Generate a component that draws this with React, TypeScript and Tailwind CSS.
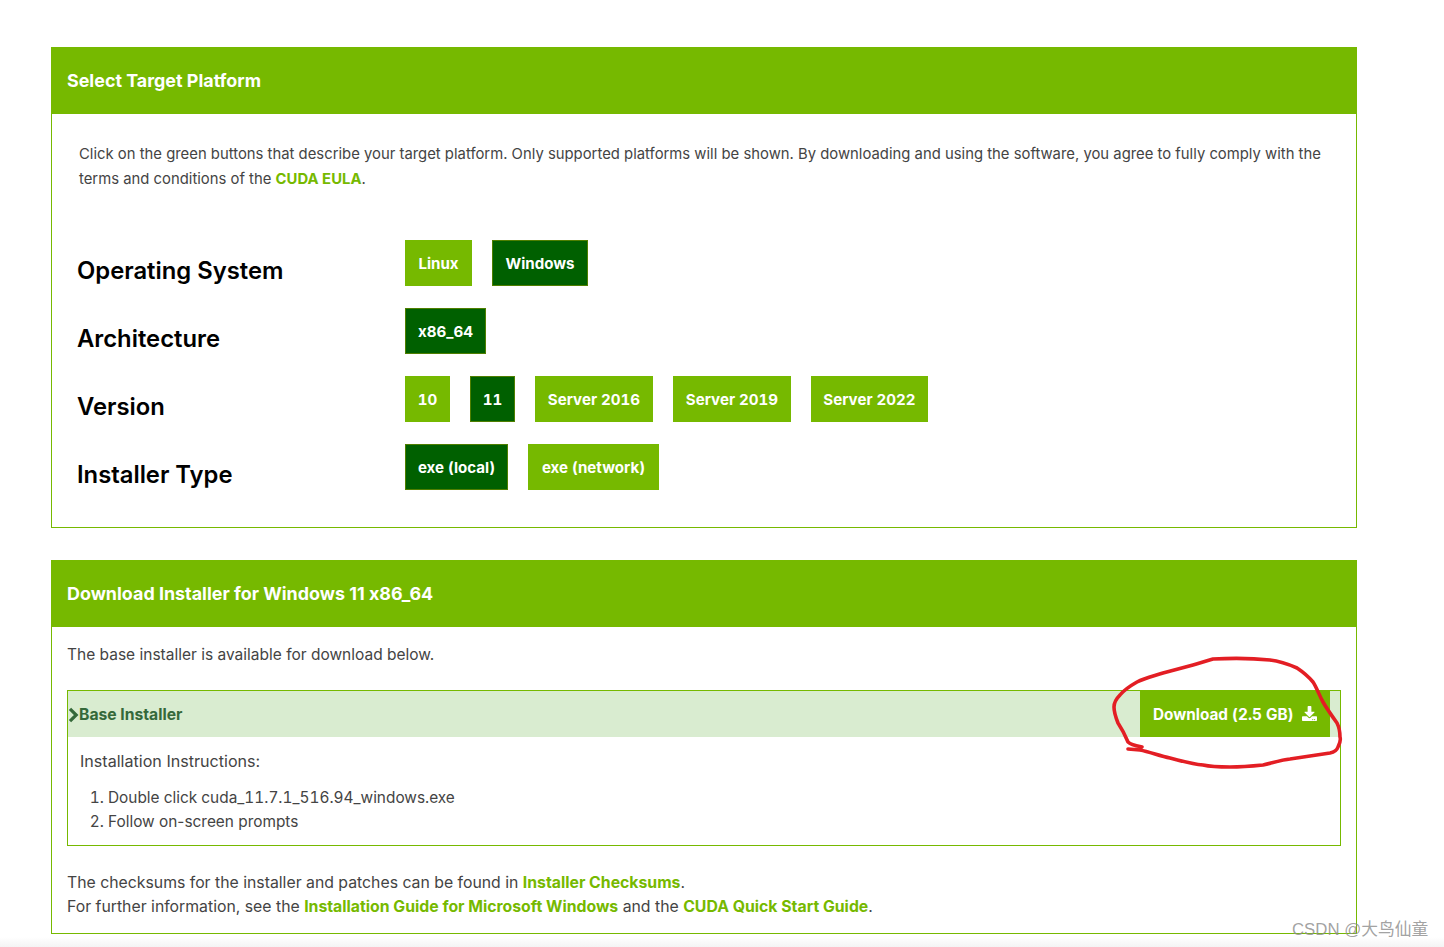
import { FaDownload } from 'react-icons/fa';

const rows = [
  {
    label: 'Operating System',
    options: [
      { name: 'Linux', width: 'w-[67px]' },
      { name: 'Windows', width: 'w-[96px]', active: true },
    ],
  },
  { label: 'Architecture', options: [{ name: 'x86_64', width: 'w-[81px]', active: true }] },
  {
    label: 'Version',
    options: [
      { name: '10', width: 'w-[45px]' },
      { name: '11', width: 'w-[45px]', active: true },
      { name: 'Server 2016', width: 'w-[118px]' },
      { name: 'Server 2019', width: 'w-[118px]' },
      { name: 'Server 2022', width: 'w-[117px]' },
    ],
  },
  {
    label: 'Installer Type',
    options: [
      { name: 'exe (local)', width: 'w-[103px]', active: true },
      { name: 'exe (network)', width: 'w-[131px]' },
    ],
  },
];

function PanelHeader({ title }: { title: string }) {
  return (
    <div className="flex h-[67px] items-center bg-[#76b900] pl-[15px] pt-[2px] text-[17.9px] font-bold text-white">
      {title}
    </div>
  );
}

export default function App() {
  return (
    <div className="relative h-[947px] w-[1444px] overflow-hidden bg-white font-['Inter',sans-serif] text-[#444444] [font-feature-settings:'calt'_0]">
      <div className="w-[1306px] ml-[51px] pt-[47px]">
        {/* Target platform */}
        <section className="h-[481px] border border-t-0 border-[#76b900]">
          <PanelHeader title="Select Target Platform" />
          <p className="pl-[27px] pr-[20px] pt-[28px] text-[14.85px] leading-[25px]">
            Click on the green buttons that describe your target platform. Only supported platforms will be shown. By
            downloading and using the software, you agree to fully comply with the terms and conditions of the{' '}
            <a className="font-bold text-[#76b900]">CUDA EULA</a>.
          </p>
          <div className="mt-[48px] flex flex-col gap-[22px]">
            {rows.map((row) => (
              <div key={row.label} className="flex h-[46px]">
                <div className="w-[353px] pl-[25px] pt-[16px] text-[23.8px] leading-[30px] font-semibold text-black">
                  {row.label}
                </div>
                <div className="flex gap-[20px]">
                  {row.options.map((opt) => (
                    <button
                      key={opt.name}
                      className={`h-[46px] pt-[2px] text-[15.1px] font-bold text-white tabular-nums ${opt.width} ${
                        opt.active ? 'border border-[#4f7f00] bg-[#006000]' : 'bg-[#76b900]'
                      }`}
                    >
                      {opt.name}
                    </button>
                  ))}
                </div>
              </div>
            ))}
          </div>
        </section>

        {/* Download */}
        <section className="mt-[32px] h-[374px] border border-t-0 border-[#76b900]">
          <PanelHeader title="Download Installer for Windows 11 x86_64" />
          <div className="px-[15px] text-[15.5px]">
            <p className="pt-[15px] leading-[25px]">The base installer is available for download below.</p>
            <div className="mt-[23px] h-[156px] border border-[#76b900]">
              <div className="flex h-[46px] items-center justify-between bg-[#d9ecd0] pr-[10px]">
                <div className="flex items-center pt-[2px] text-[15.7px] font-bold text-[#35693a]">
                  <svg width="11" height="16" viewBox="0 0 11 16" fill="none" className="shrink-0">
                    <path d="M2 1.8 L8.2 8 L2 14.2" stroke="#35693a" strokeWidth="3.2" />
                  </svg>
                  Base Installer
                </div>
                <button className="-mt-px flex h-[47px] w-[190px] items-center justify-between bg-[#76b900] px-[13px] pt-[3px] text-[15.3px] font-bold text-white tabular-nums">
                  Download (2.5 GB)
                  <FaDownload size={15} className="-mt-[4px]" />
                </button>
              </div>
              <div className="px-[12px] pt-[12px] leading-[24px]">
                <p className="text-[16.1px]">Installation Instructions:</p>
                <ol className="mt-[13px] list-decimal pl-[28px] text-[15.4px]">
                  <li className="tabular-nums">Double click cuda_11.7.1_516.94_windows.exe</li>
                  <li>Follow on-screen prompts</li>
                </ol>
              </div>
            </div>
            <p className="mt-[25px] text-[15.8px] leading-[24px]">
              The checksums for the installer and patches can be found in{' '}
              <a className="font-bold text-[#76b900]">Installer Checksums</a>.
              <br />
              For further information, see the{' '}
              <a className="font-bold text-[#76b900]">Installation Guide for Microsoft Windows</a> and the{' '}
              <a className="font-bold text-[#76b900]">CUDA Quick Start Guide</a>.
            </p>
          </div>
        </section>
      </div>

      {/* screen bottom fade */}
      <div className="absolute bottom-0 left-0 h-[10px] w-full bg-gradient-to-b from-white to-[#f4f4f4]" />

      {/* hand drawn annotation */}
      <svg className="absolute left-0 top-0" width="1444" height="947" fill="none">
        <path
          d="M1128 749 L1140 750 C1150 752 1160 756 1170 758 C1182 761 1192 764 1203 765 C1212 767 1221 767 1230 767 C1242 767 1253 766 1263 765 C1272 763 1281 760 1290 759 C1303 757 1317 755 1330 753 C1335 752 1337 750 1338 747 C1340 743 1341 740 1340 737 C1340 731 1339 727 1337 723 C1332 716 1327 709 1323 702 C1319 695 1317 688 1313 682 C1308 676 1303 672 1297 668 C1288 664 1279 661 1270 660 C1251 658 1232 658 1213 659 C1206 661 1200 663 1193 665 L1163 673 C1154 676 1145 678 1137 682 C1130 686 1124 690 1120 695 C1116 699 1114 703 1114 707 C1114 713 1116 718 1118 723 C1122 729 1125 735 1128 742 C1131 745 1137 746 1142 747"
          stroke="#e31e24"
          strokeWidth="3.6"
          strokeLinecap="round"
          strokeLinejoin="round"
        />
      </svg>

      {/* watermark */}
      <div className="absolute left-[1292px] top-[919px] font-['Liberation_Sans','Noto_Sans_CJK_SC',sans-serif] text-[16.8px] leading-[22px] whitespace-nowrap text-[#8a8a8a]/80">
        CSDN @大鸟仙童
      </div>
    </div>
  );
}
